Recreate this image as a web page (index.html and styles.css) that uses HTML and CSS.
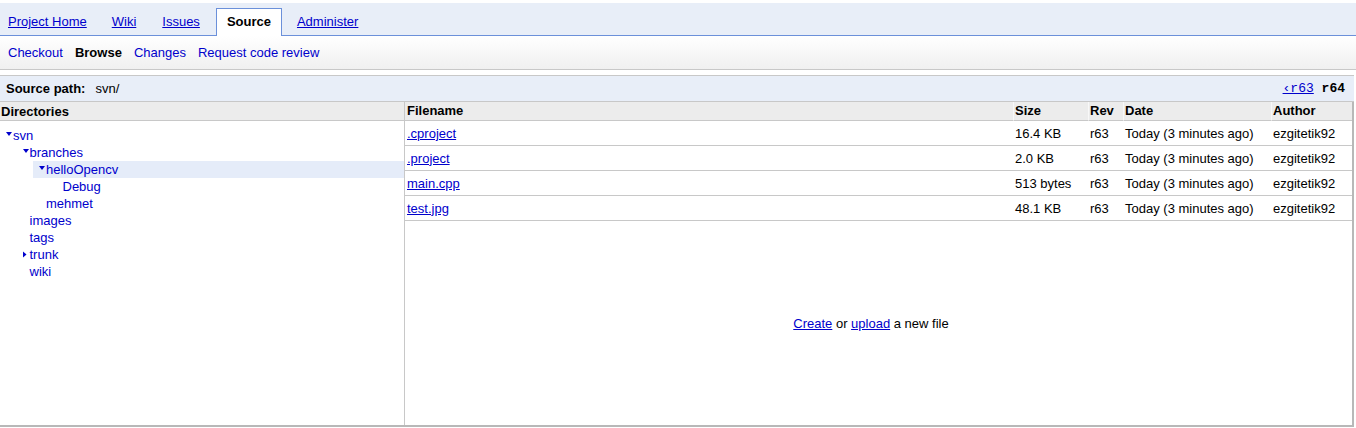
FILE: index.html
```html
<!DOCTYPE html>
<html>
<head>
<meta charset="utf-8">
<link rel="stylesheet" href="styles.css">
</head>
<body>
<div class="top">
  <div class="tabs">
    <a class="tab" href="#">Project Home</a>
    <a class="tab" href="#">Wiki</a>
    <a class="tab" href="#">Issues</a>
    <span class="tab active">Source</span>
    <a class="tab" href="#">Administer</a>
  </div>
  <div class="subtabs">
    <a href="#">Checkout</a>
    <b>Browse</b>
    <a href="#">Changes</a>
    <a href="#">Request code review</a>
  </div>
</div>

<div class="pathbar">
  <div class="path"><b>Source path:</b><span class="pathval">svn/</span></div>
  <div class="revs"><a href="#">&lsaquo;r63</a> <b>r64</b></div>
</div>

<div class="browser">
  <div class="dirs">
    <div class="head">Directories</div>
    <div class="tree">
      <div class="row"><svg class="tri" width="8" height="17"><polygon points="1,5 7,5 4,9" fill="#0000cc"/></svg><a href="#">svn</a></div>
      <div class="kids">
        <div class="row"><svg class="tri" width="8" height="17"><polygon points="1,5 7,5 4,9" fill="#0000cc"/></svg><a href="#">branches</a></div>
        <div class="kids">
          <div class="row sel"><svg class="tri" width="8" height="17"><polygon points="1,5 7,5 4,9" fill="#0000cc"/></svg><a href="#">helloOpencv</a></div>
          <div class="kids">
            <div class="row"><span class="blank"></span><a href="#">Debug</a></div>
          </div>
          <div class="row"><span class="blank"></span><a href="#">mehmet</a></div>
        </div>
        <div class="row"><span class="blank"></span><a href="#">images</a></div>
        <div class="row"><span class="blank"></span><a href="#">tags</a></div>
        <div class="row"><svg class="tri" width="8" height="17"><polygon points="1,5.5 4.5,8.5 1,11.5" fill="#0000cc"/></svg><a href="#">trunk</a></div>
        <div class="row"><span class="blank"></span><a href="#">wiki</a></div>
      </div>
    </div>
  </div>
  <div class="files">
    <table class="ftable">
      <colgroup>
        <col class="c-name"><col class="c-size"><col class="c-rev"><col class="c-date"><col>
      </colgroup>
      <thead>
        <tr><th class="first">Filename</th><th>Size</th><th>Rev</th><th>Date</th><th>Author</th></tr>
      </thead>
      <tbody>
        <tr><td><a href="#">.cproject</a></td><td>16.4 KB</td><td>r63</td><td>Today (3 minutes ago)</td><td>ezgitetik92</td></tr>
        <tr><td><a href="#">.project</a></td><td>2.0 KB</td><td>r63</td><td>Today (3 minutes ago)</td><td>ezgitetik92</td></tr>
        <tr><td><a href="#">main.cpp</a></td><td>513 bytes</td><td>r63</td><td>Today (3 minutes ago)</td><td>ezgitetik92</td></tr>
        <tr><td><a href="#">test.jpg</a></td><td>48.1 KB</td><td>r63</td><td>Today (3 minutes ago)</td><td>ezgitetik92</td></tr>
      </tbody>
    </table>
    <div class="empty"><span><a href="#">Create</a> or <a href="#">upload</a> a new file</span></div>
  </div>
</div>
</body>
</html>
```

FILE: styles.css
```css
html, body {
  margin: 0;
  padding: 0;
  background: #fff;
}
body {
  font-family: "Liberation Sans", Arial, sans-serif;
  font-size: 13px;
  color: #000;
}
a {
  color: #0000cc;
}

.top {
  padding-top: 3px;
}
.tabs {
  display: flex;
  align-items: flex-end;
  gap: 15px;
  height: 32px;
  padding-left: 3px;
  background: #e8eef8;
  border-bottom: 1px solid #6b90da;
}
.tab {
  display: block;
  height: 26px;
  line-height: 25px;
  padding: 1px 5px 0;
}
.tab:nth-child(3) {
  margin-left: 1px;
  margin-right: 1px;
}
.tab.active {
  height: 25px;
  padding: 0 10px 2px;
  margin: 0 -5px -1px;
  background: #fff;
  border: 1px solid #6b90da;
  border-bottom: none;
  font-weight: bold;
  color: #000;
}

.subtabs {
  display: flex;
  align-items: center;
  gap: 12px;
  height: 33px;
  padding-left: 8px;
  background: linear-gradient(#ffffff, #f0f0f0);
  border-bottom: 1px solid #c8c8c8;
}
.subtabs a {
  text-decoration: none;
}

.pathbar {
  display: flex;
  align-items: center;
  justify-content: space-between;
  margin-top: 5px;
  margin-right: 2px;
  height: 25px;
  padding: 0 9px 0 6px;
  background: #e8eef8;
  border-top: 1px solid #c8c8c8;
}
.pathval {
  margin-left: 10px;
}
.revs {
  font-family: "Liberation Mono", "Courier New", monospace;
  font-size: 13px;
}

.browser {
  display: flex;
  height: 323px;
  margin-right: 2px;
  border-top: 1px solid #c8c8c8;
  border-bottom: 2px solid #b8b8b8;
}
.dirs {
  width: 404px;
  border-right: 1px solid #c8c8c8;
}
.head {
  height: 18px;
  line-height: 19px;
  padding-left: 1px;
  background: #ececec;
  border-bottom: 1px solid #c8c8c8;
  font-weight: bold;
}
.tree {
  padding-top: 6px;
}
.row {
  display: flex;
  align-items: flex-start;
  height: 17px;
  line-height: 17px;
  padding-left: 5px;
}
.row a {
  text-decoration: none;
}
.row.sel {
  background: #e5ecf9;
}
.tri, .blank {
  flex: none;
  display: block;
  width: 8px;
  height: 17px;
}
.kids {
  padding-left: 16.5px;
}

.files {
  flex: 1;
  display: flex;
  flex-direction: column;
  border-right: 2px solid #b8b8b8;
}
.ftable {
  width: 100%;
  table-layout: fixed;
  border-collapse: separate;
  border-spacing: 0;
}
.c-name { width: 608px; }
.c-size { width: 75px; }
.c-rev { width: 35px; }
.c-date { width: 148px; }
.ftable th {
  height: 18px;
  line-height: 18px;
  padding: 0 0 0 1px;
  text-align: left;
  font-weight: bold;
  background: #ececec;
  border-left: 1px solid #f8f8f8;
  border-bottom: 1px solid #c8c8c8;
  white-space: nowrap;
}
.ftable th.first {
  border-left: none;
  padding-left: 2px;
}
.ftable td {
  height: 24px;
  padding: 0 0 0 2px;
  border-bottom: 1px solid #c8c8c8;
  white-space: nowrap;
  vertical-align: middle;
}
.empty {
  flex: 1;
  display: flex;
  align-items: center;
  justify-content: center;
  padding-right: 15px;
}
```
